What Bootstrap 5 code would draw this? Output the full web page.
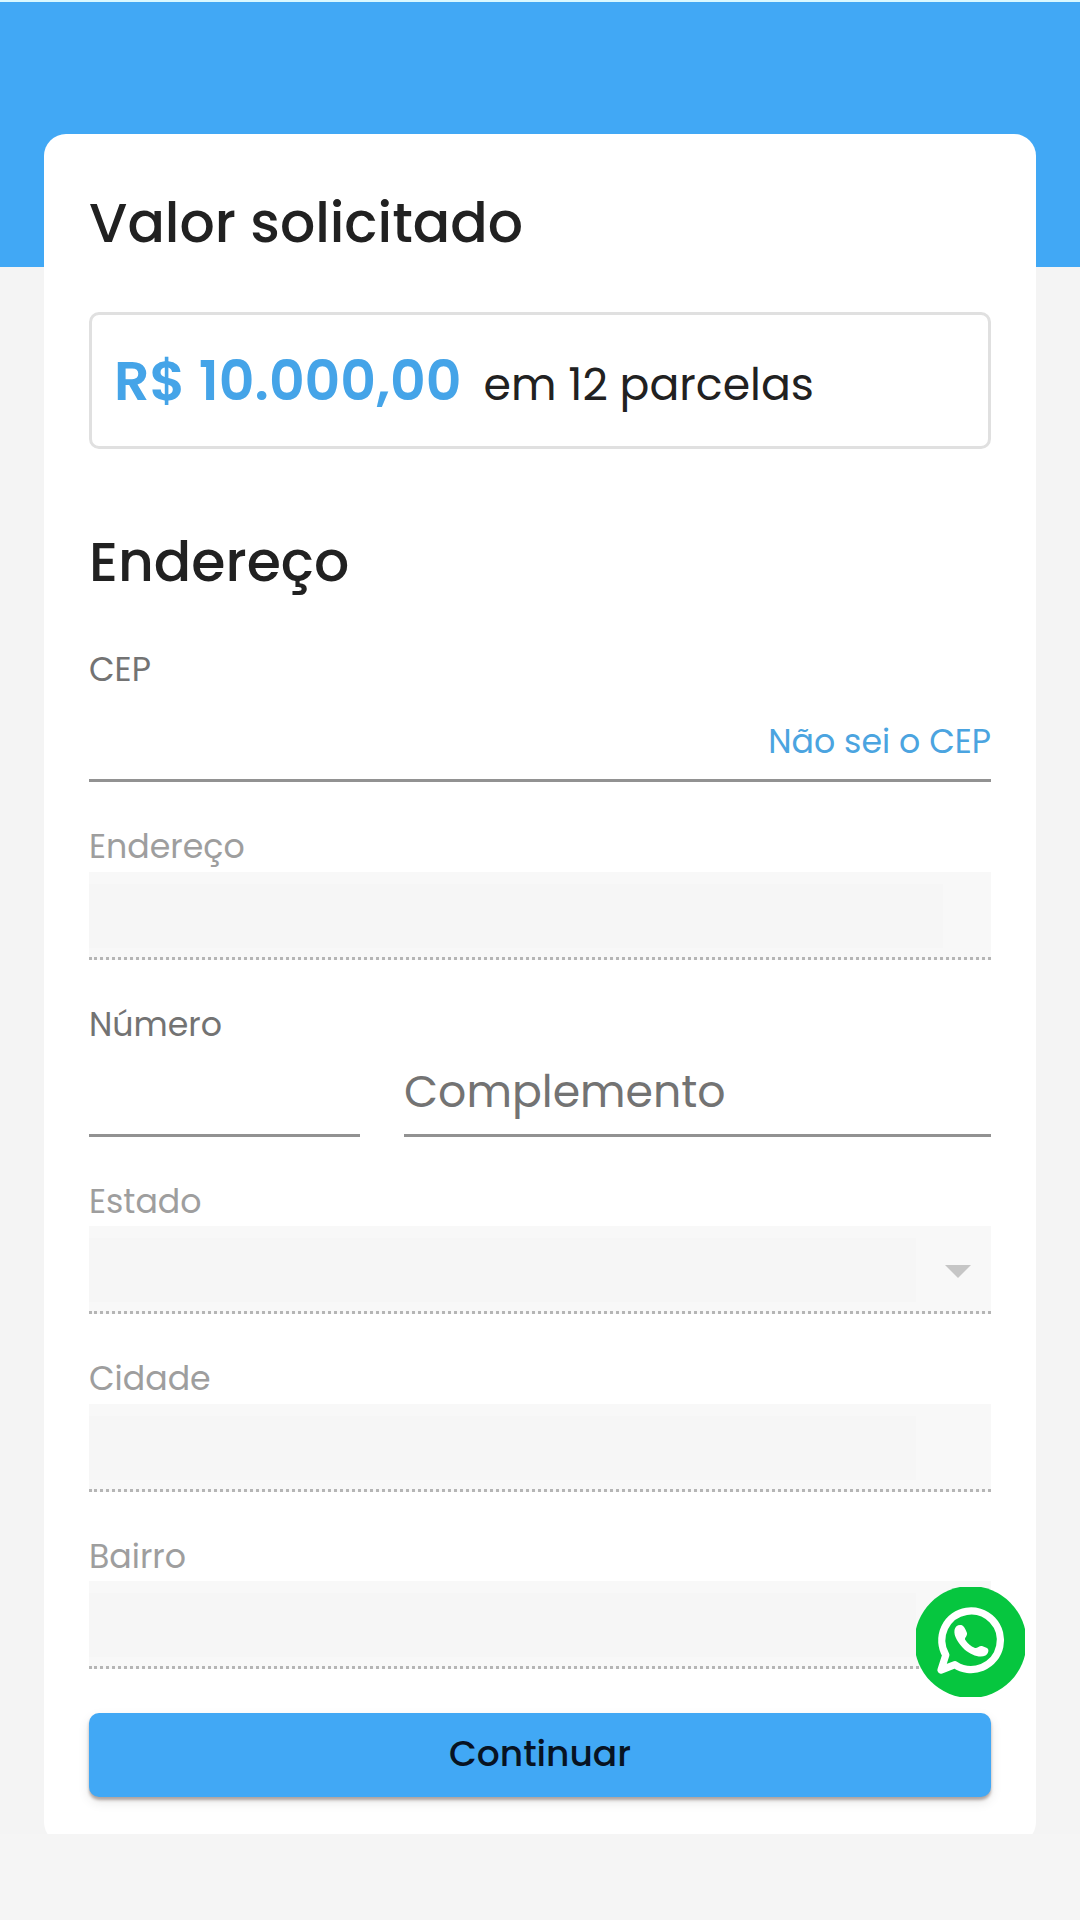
<!DOCTYPE html>
<html lang="pt-BR">
<head>
<meta charset="utf-8">
<meta name="viewport" content="width=device-width, initial-scale=1">
<title>Valor solicitado</title>
<link href="https://cdn.jsdelivr.net/npm/bootstrap@5.3.0/dist/css/bootstrap.min.css" rel="stylesheet">
<style>
  body { background: #f5f5f5; font-family: Poppins, Inter, "Open Sans", sans-serif; color: #212121; height: 1920px; overflow: hidden; }
  .page-shell { height: 1834px; padding: 134px 44px 0; border-top: 2px solid #d9f8ff; overflow: hidden;
    background: linear-gradient(#41a8f5 265px, #f4f4f4 265px); }
  .sheet { height: 1710px; border-radius: 22px; padding: 0 45px; margin-top: -2px; }
  .section-title { font-size: 55.3px; font-weight: 500; line-height: 64px; margin: 0; white-space: nowrap; }
  .title-first { padding-top: 57px; height: 178px; }
  .title-second { padding-top: 81px; height: 155.7px; }
  .amount-box { height: 137.3px; border: 3px solid #e0e0e0; border-radius: 10px; padding: 0 22px; column-gap: 22px; white-space: nowrap; }
  .amount { font-size: 55.3px; font-weight: 600; color: #45a4e8; line-height: 64px; }
  .terms { font-size: 44.2px; line-height: 64px; padding-top: 8px; }
  .field { height: 177.33px; padding-top: 44px; }
  .field-name { height: 45.33px; font-size: 33.2px; line-height: 41px; color: #737373; white-space: nowrap; }
  .field.is-off .field-name { color: #9e9e9e; }
  .control { height: 88px; border-bottom: 3px solid #929292; white-space: nowrap; }
  .is-off .control { background: #f8f8f8; border-bottom: 3px dotted #b5b5b5; padding: 12px 0 9px; }
  .fill { background: #f6f6f6; width: 827px; }
  .fill-wide { width: 854px; }
  .cep-link { font-size: 33.2px; line-height: 40px; color: #4ba4e0; text-decoration: none; padding-top: 11px; }
  .placeholder-text { font-size: 44.2px; line-height: 54px; color: #737373; padding-top: 2px; }
  .number-col { width: 271px; }
  .row-gap { column-gap: 44px; }
  .caret-mark { margin-right: 20px; }
  .btn-go { height: 84px; margin-top: 44.5px; border: 0; border-radius: 10px; background: #41a8f5; color: #071323;
    font-size: 36px; font-weight: 500; padding: 0 0 2px; box-shadow: 0 3px 3px rgba(60,30,20,.34), 0 5px 12px rgba(0,0,0,.1); }
  .chat-bubble { position: absolute; left: 916px; top: 1587px; width: 109px; height: 110px; }
</style>
</head>
<body class="position-relative">
<main class="page-shell">
  <div class="sheet bg-white d-flex flex-column">
    <h1 class="section-title title-first">Valor solicitado</h1>
    <div class="amount-box d-flex align-items-center">
      <span class="amount">R$ 10.000,00</span>
      <span class="terms">em 12 parcelas</span>
    </div>
    <h2 class="section-title title-second">Endereço</h2>

    <div class="field">
      <div class="field-name">CEP</div>
      <div class="control d-flex justify-content-end align-items-center"><a class="cep-link" href="#">Não sei o CEP</a></div>
    </div>
    <div class="field is-off">
      <div class="field-name">Endereço</div>
      <div class="control d-flex"><div class="fill fill-wide"></div></div>
    </div>
    <div class="d-flex row-gap">
      <div class="field number-col">
        <div class="field-name">Número</div>
        <div class="control"></div>
      </div>
      <div class="field flex-grow-1">
        <div class="field-name"></div>
        <div class="control d-flex align-items-center"><span class="placeholder-text">Complemento</span></div>
      </div>
    </div>
    <div class="field is-off">
      <div class="field-name">Estado</div>
      <div class="control d-flex justify-content-between align-items-stretch">
        <div class="fill"></div>
        <svg class="caret-mark align-self-center" width="26" height="15" viewBox="0 0 26 15"><path d="M0 2h26L13 15z" fill="#c6c6c6"/></svg>
      </div>
    </div>
    <div class="field is-off">
      <div class="field-name">Cidade</div>
      <div class="control d-flex"><div class="fill"></div></div>
    </div>
    <div class="field is-off">
      <div class="field-name">Bairro</div>
      <div class="control d-flex"><div class="fill"></div></div>
    </div>
    <button class="btn btn-go w-100 flex-shrink-0" type="button">Continuar</button>
  </div>
</main>
<a class="chat-bubble" href="#" aria-label="WhatsApp">
  <svg class="d-block" width="109" height="110" viewBox="0 0 109 110">
    <circle cx="54.5" cy="55" r="56" fill="#06c63f"/>
    <path d="M29.8 68A29.3 29.3 0 1 1 39 77.7L25 83Z" fill="none" stroke="#fff" stroke-width="7.3" stroke-linejoin="round"/>
    <path d="M38.500 43C39 39.500 42 37.500 45 38C48 38.300 49.500 42.500 50.800 45.500C52 48.500 48.500 50.500 49 52.500C51.500 56.500 54.500 59 59 61C61.500 61.500 63.500 58.300 66 59L71 61C73.500 62.500 72.500 66.500 69.500 68.500C64 71.500 55 68 48.500 62.500C42 56 37.500 49 38.500 43Z" fill="#fff"/>
  </svg>
</a>
<script src="https://cdn.jsdelivr.net/npm/bootstrap@5.3.0/dist/js/bootstrap.bundle.min.js"></script>
</body>
</html>
